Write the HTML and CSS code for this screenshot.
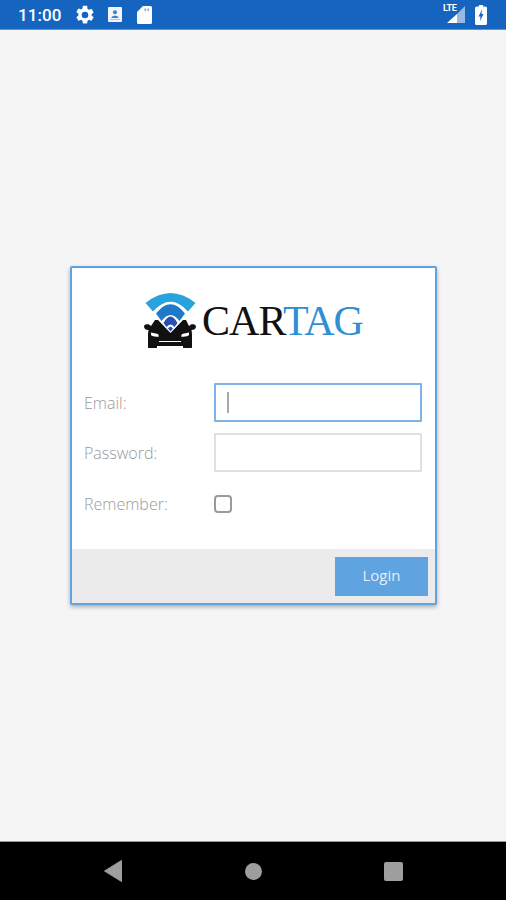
FILE: index.html
```html
<!DOCTYPE html>
<html lang="en">
<head>
    <meta charset="UTF-8">
    <meta name="viewport" content="width=device-width, initial-scale=1.0">
    <title>CarTag Login</title>
    <link rel="stylesheet" href="styles.css">
</head>
<body>
    <div class="statusbar">
        <span class="time">11:00</span>
        <svg class="icon-gear" viewBox="0 0 24 24"><path fill="#fff" d="M19.14 12.94c.04-.3.06-.61.06-.94s-.02-.64-.07-.94l2.03-1.58a.49.49 0 0 0 .12-.61l-1.92-3.32a.49.49 0 0 0-.59-.22l-2.39.96a7 7 0 0 0-1.62-.94l-.36-2.54A.48.48 0 0 0 13.92 2h-3.84a.47.47 0 0 0-.47.41l-.36 2.54c-.59.24-1.13.57-1.62.94l-2.39-.96a.49.49 0 0 0-.59.22L2.74 8.47a.47.47 0 0 0 .12.61l2.03 1.58c-.05.3-.09.63-.09.94s.02.64.07.94l-2.03 1.58a.49.49 0 0 0-.12.61l1.92 3.32c.12.22.37.29.59.22l2.39-.96c.5.38 1.03.7 1.62.94l.36 2.54c.05.24.24.41.48.41h3.84c.24 0 .44-.17.47-.41l.36-2.54c.59-.24 1.13-.56 1.62-.94l2.39.96c.22.08.47 0 .59-.22l1.92-3.32a.47.47 0 0 0-.12-.61l-2.01-1.58zM12 15.6A3.6 3.6 0 1 1 12 8.4a3.6 3.6 0 0 1 0 7.2z"/></svg>
        <svg class="icon-photo" viewBox="0 0 14 15"><rect width="14" height="15" rx="1" fill="#f2f6fc"/><circle cx="7" cy="5.200" r="2" fill="#3f80cc"/><path fill="#3f80cc" d="M3.500 10.500C4 8 10 8 10.500 10.500V11h-7z"/><rect x="2" y="12" width="10" height="1" fill="#a9c6e8"/></svg>
        <svg class="icon-sd" viewBox="0 0 15 18"><path fill="#fff" d="M6 0h7.500A1.500 1.500 0 0 1 15 1.500v15a1.500 1.500 0 0 1-1.500 1.500h-12A1.500 1.500 0 0 1 0 16.500V6z"/><path fill="#7fa8da" d="M7.500 2.500h1.500v2.500H7.500zM10.500 2.500h1.500v2.500h-1.500z"/></svg>
        <span class="status-spacer"></span>
        <div class="signal">
            <svg viewBox="0 0 18 17"><path fill="#fff" fill-opacity=".55" d="M18 0v17H9V9z"/><path fill="#fff" d="M10 8v9H0z"/></svg>
            <span class="lte">LTE</span>
        </div>
        <svg class="icon-battery" viewBox="0 0 12 20"><path fill="#fff" d="M4 0h4v1.500h2.500A1.500 1.500 0 0 1 12 3v15.500a1.500 1.500 0 0 1-1.500 1.500h-9A1.500 1.500 0 0 1 0 18.500V3a1.500 1.500 0 0 1 1.500-1.500H4z"/><path fill="#1565c0" d="M7 4.500 3.500 11.500H5.500L5 16l3.500-7H6.500z"/></svg>
    </div>

    <div class="main">
        <div class="card">
            <div class="logo">
                <svg class="logo-icon" viewBox="0 0 52 55">
                    <path fill="#111" d="M11 27h3l12.500 13L39 27h3l3 6 2-1.500c1-.5 5-.5 5 2s-2 3.500-4.500 3.500l.5 4v13c0 1-1 2-2 2h-5c-1 0-2-1-2-1.500v-1.500H13v1.500c0 .5-1 1.500-2 1.500H6c-1 0-2-1-2-2V41l.5-4C2 37 0 36 0 33.500s4-2.500 5-2L7 33z"/>
                    <path fill="#fff" d="M7 39.500l7 1.500 1 2.500c-3 .5-7 0-8-1.500zM45 39.500l-7 1.500-1 2.500c3 .5 7 0 8-1.500z"/>
                    <path fill="#fff" d="M15 48h22v1H15z"/>
                    <path fill="#29a3dc" d="M1.500 10Q26.500-10 51.500 10L44 18.500Q26.500-1 9 18.500z"/>
                    <path fill="#1f78c8" d="M12 20.500Q26.500 2 41 20.500L35.500 28Q26.500 16 17.500 28z"/>
                    <path fill="#2a4fb0" d="M19.500 30Q26.500 17 33.500 30L30.500 34Q26.500 29 22.500 34z"/>
                    <path fill="#2a4fb0" d="M24 35.500Q26.500 32 29 35.500L26.500 38.500z"/>
                </svg>
                <span class="logo-text">CAR<span class="logo-tag">TAG</span></span>
            </div>
            <div class="form">
                <div class="form-group">
                    <label for="email">Email:</label>
                    <div class="input-wrap">
                        <input type="text" id="email" class="focused">
                        <span class="caret"></span>
                    </div>
                </div>
                <div class="form-group">
                    <label for="password">Password:</label>
                    <div class="input-wrap">
                        <input type="password" id="password">
                    </div>
                </div>
                <div class="form-group remember">
                    <label for="remember">Remember:</label>
                    <input type="checkbox" id="remember">
                </div>
            </div>
            <div class="card-footer">
                <button class="login-button">Login</button>
            </div>
        </div>
    </div>

    <div class="navbar">
        <svg class="nav-back" viewBox="0 0 18 22"><path fill="#9e9e9e" stroke="#9e9e9e" stroke-width="1" stroke-linejoin="round" d="M17.500.5v21L.5 11z"/></svg>
        <span class="nav-home"></span>
        <span class="nav-recent"></span>
    </div>
</body>
</html>
```

FILE: styles.css
```css
html, body {
    height: 100%;
}
body {
    font-family: 'Open Sans', 'Liberation Sans', sans-serif;
    background-color: #f5f5f5;
    margin: 0;
    padding: 0;
    display: flex;
    flex-direction: column;
    height: 900px;
    overflow: hidden;
}
.statusbar {
    display: flex;
    align-items: center;
    flex: none;
    height: 30px;
    box-sizing: border-box;
    padding: 0 19px 0 18px;
    background-color: #1565c0;
    border-bottom: 1px solid #5c93d2;
    color: #fff;
}
.time {
    font-family: Roboto, sans-serif;
    font-size: 17px;
    font-weight: 500;
    letter-spacing: 0.1px;
    width: 56px;
}
.icon-gear {
    width: 22px;
    height: 22px;
    margin-right: 12px;
}
.icon-photo {
    width: 14px;
    height: 15px;
    margin-right: 15px;
}
.icon-sd {
    width: 15px;
    height: 18px;
}
.status-spacer {
    flex: 1;
}
.signal {
    position: relative;
    width: 18px;
    height: 17px;
    margin-right: 10px;
}
.signal svg {
    display: block;
    width: 18px;
    height: 17px;
}
.lte {
    position: absolute;
    left: -4px;
    top: -3px;
    font-family: Roboto, sans-serif;
    font-size: 9px;
    font-weight: 700;
    line-height: 10px;
    letter-spacing: -0.3px;
}
.icon-battery {
    width: 12px;
    height: 20px;
}
.main {
    flex: 1;
    display: flex;
    align-items: center;
    justify-content: center;
    padding-left: 1px;
}
.card {
    width: 367px;
    box-sizing: border-box;
    background-color: #fff;
    border: 2px solid #5fa3e0;
    border-radius: 2px;
    box-shadow: 0 2px 4px rgba(0, 0, 0, 0.3);
}
.logo {
    display: flex;
    align-items: flex-end;
    justify-content: center;
    padding: 25px 0 0 0;
    height: 55px;
}
.logo-icon {
    width: 52px;
    height: 55px;
    margin-right: 6px;
}
.logo-text {
    font-family: 'Liberation Serif', serif;
    font-size: 42px;
    letter-spacing: -1px;
    line-height: 48px;
    color: #111;
    margin-bottom: 3px;
}
.logo-tag {
    color: #2f8fd3;
}
.form {
    padding: 35px 13px 0 12px;
    height: 166px;
}
.form-group {
    display: flex;
    align-items: center;
    margin-bottom: 11px;
}
.form-group label {
    width: 130px;
    font-size: 16px;
    font-weight: 300;
    color: #999;
}
.input-wrap {
    position: relative;
    flex: 1;
}
.input-wrap input {
    display: block;
    width: 100%;
    height: 39px;
    box-sizing: border-box;
    border: 2px solid #e0e0e0;
    border-radius: 1px;
    background-color: #fff;
    outline: none;
}
.input-wrap input.focused {
    border-color: #7fb2e5;
}
.caret {
    position: absolute;
    left: 13px;
    top: 9px;
    width: 2px;
    height: 21px;
    background-color: #aaa;
}
.remember {
    margin-top: 21px;
}
.remember input {
    appearance: none;
    width: 18px;
    height: 18px;
    margin: 0;
    box-sizing: border-box;
    border: 2px solid #9a9a9a;
    border-radius: 4px;
    background-color: #fff;
}
.card-footer {
    display: flex;
    justify-content: flex-end;
    height: 54px;
    box-sizing: border-box;
    padding: 8px 7px 7px 0;
    background-color: #ebebeb;
}
.login-button {
    width: 93px;
    height: 39px;
    border: none;
    background-color: #5fa3e0;
    color: #e4effa;
    font-family: 'Open Sans', sans-serif;
    font-size: 15px;
    padding: 0 0 3px 0;
}
.navbar {
    flex: none;
    display: flex;
    align-items: center;
    height: 59px;
    box-sizing: border-box;
    background-color: #000;
    border-top: 1px solid #9a9a9a;
    padding-left: 104px;
}
.nav-back {
    width: 18px;
    height: 22px;
    margin-right: 123px;
}
.nav-home {
    width: 17px;
    height: 17px;
    border-radius: 50%;
    background-color: #9e9e9e;
    margin-right: 122px;
}
.nav-recent {
    width: 19px;
    height: 19px;
    border-radius: 2px;
    background-color: #9e9e9e;
}
```
